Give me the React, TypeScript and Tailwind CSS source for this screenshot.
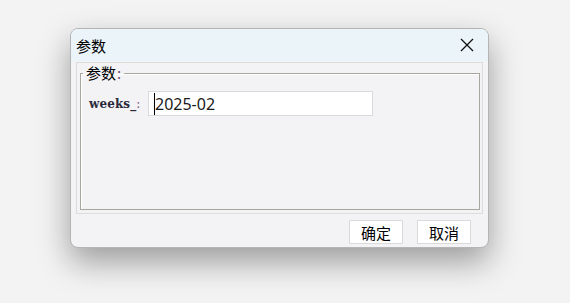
export default function App() {
  return (
    <div className="w-[570px] h-[303px] bg-[#f3f3f4] pl-[70px] pt-[28px] overflow-hidden font-['Noto_Sans_CJK_SC',sans-serif] text-black">
      <div className="w-[419px] h-[220px] rounded-[8px] border border-[#b4b4b4] bg-[#f3f3f5] shadow-[0_14px_32px_rgba(0,0,0,0.36)] overflow-hidden flex flex-col">
        <div className="h-[32px] shrink-0 bg-[#eaf4f9] flex items-center justify-between pl-[5px] pr-[14px]">
          <span className="text-[15px] leading-none">参数</span>
          <svg width="14" height="14" viewBox="0 0 14 14" className="block">
            <path d="M1 1 L13 13 M13 1 L1 13" stroke="#111" strokeWidth="1.3" fill="none" />
          </svg>
        </div>
        <div className="mx-[5px] mt-[1px] h-[152px] shrink-0 border border-[#dcdcdc] pl-[3px] pr-[2px]">
          <fieldset className="h-[147px] border border-[#a8a69f] shadow-[inset_1px_1px_0_#ffffff]">
            <legend className="ml-[2px] px-[3px] text-[15px] leading-[20px]">
              参数<span className="ml-[1px] text-[#6b4a7a]">:</span>
            </legend>
            <div className="flex items-center pl-[8px] mt-[8px]">
              <span className="w-[59px] font-['DejaVu_Serif',serif] font-bold text-[12px] tracking-[0.1px] text-[#2a2a3a]">
                weeks_<span className="text-[#7a5a8a] font-normal">:</span>
              </span>
              <div className="w-[225px] h-[25px] border border-[#dadada] bg-white flex items-center pl-[5px]">
                <span className="w-px h-[22px] bg-black" />
                <span className="text-[16px] leading-none text-[#1a1a1a] font-['Noto_Sans',sans-serif]">2025-02</span>
              </div>
            </div>
          </fieldset>
        </div>
        <div className="flex justify-end gap-[14px] pr-[17px] pt-[6px]">
          <div className="w-[54px] h-[24px] bg-white border border-[#dadada] flex items-center justify-center text-[15px] leading-none">
            确定
          </div>
          <div className="w-[54px] h-[24px] bg-white border border-[#dadada] flex items-center justify-center text-[15px] leading-none">
            取消
          </div>
        </div>
      </div>
    </div>
  );
}
